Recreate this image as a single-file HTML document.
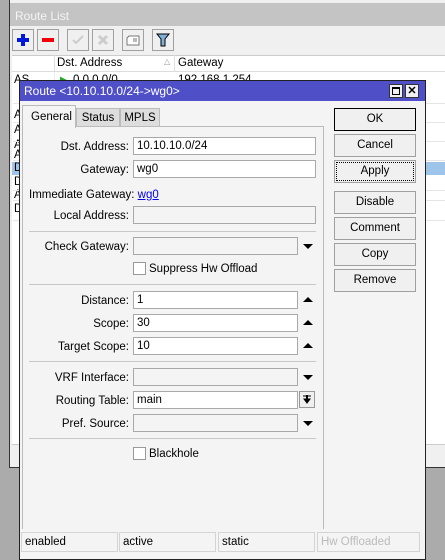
<!DOCTYPE html>
<html><head><style>
*{margin:0;padding:0;box-sizing:border-box}
body{width:445px;height:558px;overflow:hidden;background:#ababab;font-family:"Liberation Sans",sans-serif;font-size:11.5px;color:#000;position:relative}
.a{position:absolute}
.lbl{position:absolute;right:316px;text-align:right;white-space:nowrap;line-height:14px}
.inp{position:absolute;left:133px;height:18px;border:1px solid #a9a9a9;background:#fff;padding-left:3px;line-height:16px}
.dis{background:#f4f4f4}
.btn{position:absolute;left:334px;width:82px;height:23px;border:1px solid #a0a0a0;background:#f0f0f0;text-align:center;line-height:21px}
.sep{position:absolute;left:29px;width:287px;height:1px;background:#c8c8c8}
.up{position:absolute;left:303px;width:0;height:0;border-left:5px solid transparent;border-right:5px solid transparent;border-bottom:5px solid #000}
.dn{position:absolute;left:303px;width:0;height:0;border-left:5px solid transparent;border-right:5px solid transparent;border-top:5px solid #000}
.cb{position:absolute;left:133px;width:13px;height:13px;border:1px solid #999;background:#fff}
.tb{position:absolute;top:29px;width:22px;height:22px;border:1px solid #a0a0a0;background:#f0f0f0}
.row{position:absolute;left:13px;width:432px;height:1px;background:#e6e6e6}
.st{position:absolute;top:532px;height:20px;border:1px solid #d4d4d4;line-height:18px;padding-left:3px}
.c{position:absolute;left:14px}
</style></head><body>
<div class="a" style="left:9px;top:0;width:436px;height:468px;background:#f0f0f0;border-left:1px solid #333;border-bottom:1px solid #333"></div>
<div class="a" style="left:10px;top:3px;width:435px;height:23px;background:#c4c4c4;color:#f4f4f4;font-size:12px;line-height:26px;padding-left:5px">Route List</div>
<div class="tb" style="left:12px"><svg width="20" height="20"><path d="M10 4v12M4 10h12" stroke="#0018d8" stroke-width="4"/></svg></div>
<div class="tb" style="left:37px"><svg width="20" height="20"><path d="M4 10h12" stroke="#e00" stroke-width="4"/></svg></div>
<div class="tb" style="left:67px"><svg width="20" height="20"><path d="M5 10l3 3 7-7" stroke="#ccc" stroke-width="2" fill="none"/></svg></div>
<div class="tb" style="left:92px"><svg width="20" height="20"><path d="M6 6l8 8M14 6l-8 8" stroke="#ccc" stroke-width="3" fill="none"/></svg></div>
<div class="tb" style="left:122px"><svg width="20" height="20"><path d="M4 8l2-2h10v9H4z" stroke="#777" fill="#fff"/><path d="M10 9h4M10 11h4" stroke="#777"/></svg></div>
<div class="tb" style="left:152px"><svg width="20" height="20"><path d="M4 4h12l-4 5v7h-4V9z" stroke="#000" fill="#7fb0d8"/></svg></div>
<div class="a" style="left:12px;top:55px;width:433px;height:17px;background:#fff;border-top:1px solid #ccc;border-bottom:1px solid #ddd"></div>
<div class="a" style="left:54px;top:55px;width:1px;height:17px;background:#ddd"></div>
<div class="a" style="left:174px;top:55px;width:1px;height:17px;background:#ddd"></div>
<div class="a" style="left:57px;top:57px">Dst. Address</div>
<div class="a" style="left:164px;top:57px;font-size:8px;color:#999">△</div>
<div class="a" style="left:178px;top:57px">Gateway</div>
<div class="a" style="left:12px;top:72px;width:433px;height:372px;background:#fff"></div>
<div class="a" style="left:54px;top:72px;width:1px;height:372px;background:#eee"></div>
<div class="c" style="top:74px">AS</div>
<div class="c" style="top:109px">A</div><div class="c" style="top:124px">A</div><div class="c" style="top:139px">A</div><div class="c" style="top:149px">A</div>
<div class="a" style="left:60px;top:73px;color:#2a2">▶</div>
<div class="a" style="left:73px;top:74px">0.0.0.0/0</div>
<div class="a" style="left:178px;top:74px">192.168.1.254</div>
<div class="row" style="top:103px"></div><div class="row" style="top:122px"></div><div class="row" style="top:141px"></div><div class="row" style="top:160px"></div>
<div class="a" style="left:12px;top:162px;width:433px;height:13px;background:#9ec4ea"></div>
<div class="c" style="top:162px">D</div><div class="c" style="top:176px">D</div><div class="c" style="top:189px">A</div><div class="c" style="top:203px">D</div>
<div class="row" style="top:190px"></div><div class="row" style="top:200px"></div><div class="row" style="top:220px"></div>
<div class="a" style="left:12px;top:444px;width:433px;height:18px;background:#f0f0f0;border-top:1px solid #ccc"></div>
<div class="a" style="left:19px;top:80px;width:407px;height:480px;background:#f4f4f4;border:1px solid #222"></div>
<div class="a" style="left:20px;top:81px;width:405px;height:20px;background:#4f50c8;color:#fff;font-size:12px;line-height:20px;padding-left:4px">Route &lt;10.10.10.0/24-&gt;wg0&gt;</div>
<div class="a" style="left:389px;top:84px;width:14px;height:14px;background:#f0f0f0;border:1px solid #333"><div style="margin:2px;width:8px;height:8px;border:1px solid #000;border-top-width:2px"></div></div>
<div class="a" style="left:405px;top:84px;width:14px;height:14px;background:#f0f0f0;border:1px solid #333;font-size:11px;font-weight:bold;text-align:center;line-height:12px">✕</div>
<div class="a" style="left:22px;top:127px;width:302px;height:402px;border:1px solid #bbb;border-top:none;border-bottom:none"></div>
<div class="a" style="left:22px;top:126px;width:302px;height:1px;background:#bbb"></div>
<div class="a" style="left:22px;top:105px;width:54px;height:23px;background:#f4f4f4;border:1px solid #bbb;border-bottom:none;line-height:22px;padding-left:8px">General</div>
<div class="a" style="left:76px;top:108px;width:44px;height:19px;background:#ddd;border:1px solid #bbb;line-height:18px;text-align:center">Status</div>
<div class="a" style="left:120px;top:108px;width:40px;height:19px;background:#ddd;border:1px solid #bbb;line-height:18px;text-align:center">MPLS</div>

<div class="lbl" style="top:140px">Dst. Address:</div><div class="inp" style="top:137px;width:183px">10.10.10.0/24</div>
<div class="lbl" style="top:163px">Gateway:</div><div class="inp" style="top:160px;width:183px">wg0</div>
<div class="a" style="left:29px;top:189px">Immediate Gateway: <span style="color:#00e;text-decoration:underline">wg0</span></div>
<div class="lbl" style="top:209px">Local Address:</div><div class="inp dis" style="top:206px;width:183px"></div>
<div class="sep" style="top:231px"></div>
<div class="lbl" style="top:240px">Check Gateway:</div><div class="inp dis" style="top:237px;width:165px"></div><div class="dn" style="top:244px"></div>
<div class="cb" style="top:262px"></div><div class="a" style="left:149px;top:263px">Suppress Hw Offload</div>
<div class="sep" style="top:284px"></div>
<div class="lbl" style="top:294px">Distance:</div><div class="inp" style="top:291px;width:165px">1</div><div class="up" style="top:297px"></div>
<div class="lbl" style="top:317px">Scope:</div><div class="inp" style="top:314px;width:165px">30</div><div class="up" style="top:320px"></div>
<div class="lbl" style="top:340px">Target Scope:</div><div class="inp" style="top:337px;width:165px">10</div><div class="up" style="top:343px"></div>
<div class="sep" style="top:361px"></div>
<div class="lbl" style="top:371px">VRF Interface:</div><div class="inp dis" style="top:368px;width:165px"></div><div class="dn" style="top:375px"></div>
<div class="lbl" style="top:394px">Routing Table:</div><div class="inp" style="top:391px;width:165px">main</div>
<div class="a" style="left:299px;top:391px;width:16px;height:17px;border:1px solid #999;background:#f0f0f0"><svg width="14" height="15"><path d="M3 4h8M4 7h6l-3 4z" stroke="#000" fill="#000"/><path d="M7 3v5" stroke="#000" stroke-width="2"/></svg></div>
<div class="lbl" style="top:417px">Pref. Source:</div><div class="inp dis" style="top:414px;width:165px"></div><div class="dn" style="top:421px"></div>
<div class="sep" style="top:438px"></div>
<div class="cb" style="top:447px"></div><div class="a" style="left:149px;top:448px">Blackhole</div>

<div class="btn" style="top:108px;border:1px solid #000">OK</div>
<div class="btn" style="top:134px">Cancel</div>
<div class="btn" style="top:160px"><div style="margin:1px;height:19px;border:1px dotted #000;line-height:17px">Apply</div></div>
<div class="btn" style="top:191px">Disable</div>
<div class="btn" style="top:217px">Comment</div>
<div class="btn" style="top:243px">Copy</div>
<div class="btn" style="top:269px">Remove</div>

<div class="st" style="left:21px;width:97px">enabled</div>
<div class="st" style="left:119px;width:97px">active</div>
<div class="st" style="left:218px;width:97px">static</div>
<div class="st" style="left:317px;width:103px;color:#bbb">Hw Offloaded</div>
</body></html>
